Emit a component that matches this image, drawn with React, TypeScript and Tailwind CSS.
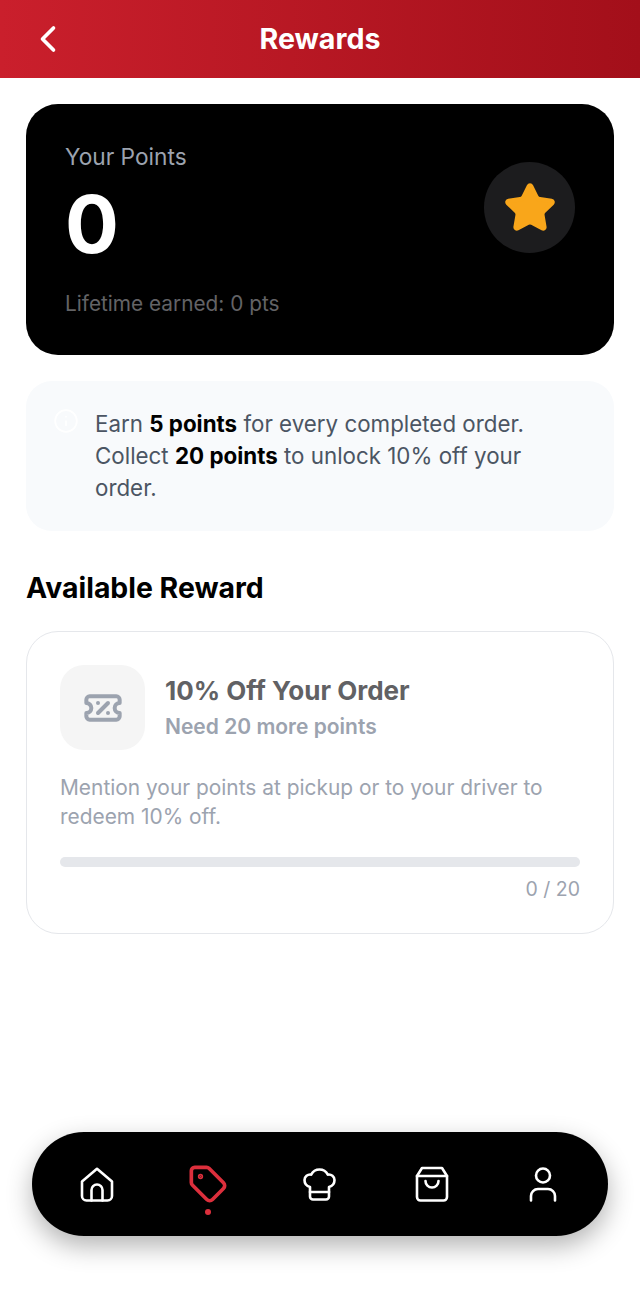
import { ChevronLeft, Info, Star, TicketPercent, Tag } from "lucide-react";

const font = { fontFamily: "Inter, sans-serif" };

const HomeIcon = () => (
  <svg width="34" height="35" viewBox="0 0 34 35" fill="none" stroke="white" strokeWidth="2.6" strokeLinejoin="round" strokeLinecap="round">
    <path d="M2 14.5 L17 1.8 L32 14.5 V29 a4.5 4.5 0 0 1 -4.5 4.5 H6.5 a4.5 4.5 0 0 1 -4.5 -4.5 Z" />
    <path d="M11.5 33.5 V23 a5.5 5.5 0 0 1 11 0 V33.5" />
  </svg>
);

const ChefIcon = () => (
  <svg width="33" height="33" viewBox="0 0 33 33" fill="none" stroke="white" strokeWidth="2.6" strokeLinejoin="round" strokeLinecap="round">
    <path d="M7 19 C3.2 18 1.5 15 1.5 12 C1.5 8.5 4.7 6 8.2 6.6 C9.8 3.5 13 1.5 16.5 1.5 C20 1.5 23.2 3.5 24.8 6.6 C28.3 6 31.5 8.5 31.5 12 C31.5 15 29.8 18 26 19 V28.5 a3 3 0 0 1 -3 3 H10 a3 3 0 0 1 -3 -3 Z" />
    <path d="M7 24 H26" />
  </svg>
);

const BagIcon = () => (
  <svg width="34" height="36" viewBox="0 0 34 36" fill="none" stroke="white" strokeWidth="2.6" strokeLinejoin="round" strokeLinecap="round">
    <path d="M2 10 L7 2 H27 L32 10 V31 a3.5 3.5 0 0 1 -3.5 3.5 H5.5 a3.5 3.5 0 0 1 -3.5 -3.5 Z" />
    <path d="M2 10 H32" />
    <path d="M10.5 15 a6.5 6.5 0 0 0 13 0" />
  </svg>
);

const UserIcon = () => (
  <svg width="28" height="35" viewBox="0 0 28 35" fill="none" stroke="white" strokeWidth="2.6" strokeLinecap="round">
    <circle cx="14" cy="8.5" r="7" />
    <path d="M2 33.5 V29 a7 7 0 0 1 7 -7 H19 a7 7 0 0 1 7 7 V33.5" />
  </svg>
);

export default function App() {
  return (
    <div className="relative min-h-screen bg-white" style={font}>
      <header className="relative flex h-[78px] items-center justify-center bg-gradient-to-r from-[#ca1f2c] to-[#a30f1a]">
        <ChevronLeft className="absolute left-[26px] top-[17px] text-white" size={44} strokeWidth={2} />
        <h1 className="text-[28.6px] font-bold text-white">Rewards</h1>
      </header>

      <main className="flex flex-col px-[26px] pt-[26px]">
        <section className="flex h-[251px] items-start justify-between rounded-[32px] bg-black pl-[39px] pr-[39px] pt-[39px]">
          <div className="flex flex-col">
            <p className="text-[22.7px] leading-[28px] text-[#9ca3af]">Your Points</p>
            <p className="mt-[13px] text-[80px] font-bold leading-[80px] text-white">0</p>
            <p className="mt-[27px] text-[20.8px] leading-[26px] text-[#636366]">Lifetime earned: 0 pts</p>
          </div>
          <div className="mt-[19px] flex h-[91px] w-[91px] items-center justify-center rounded-full bg-[#1c1c1e]">
            <Star size={54} className="text-[#f9a61a]" fill="#f9a61a" strokeWidth={2} />
          </div>
        </section>

        <section className="mt-[26px] flex h-[150px] gap-[16px] rounded-[26px] bg-[#f8fafc] pl-[27px] pr-[50px] pt-[27px]">
          <Info size={26} className="shrink-0 text-white" strokeWidth={1.6} />
          <p className="text-[22.35px] leading-[32px] text-[#4b5563]">
            Earn <b className="font-bold text-black">5 points</b> for every completed order. Collect{" "}
            <b className="font-bold text-black">20 points</b> to unlock 10% off your order.
          </p>
        </section>

        <h2 className="mt-[39px] text-[28.4px] font-bold leading-[36px] text-black">Available Reward</h2>

        <section className="mt-[25px] flex h-[303px] flex-col rounded-[32px] border border-[#e5e7eb] px-[33px] pt-[33px]">
          <div className="flex items-center gap-[20px]">
            <div className="flex h-[85px] w-[85px] items-center justify-center rounded-[24px] bg-[#f5f5f5]">
              <TicketPercent size={40} className="text-[#9ca3af]" strokeWidth={2.4} />
            </div>
            <div className="flex flex-col">
              <p className="text-[26px] font-bold leading-[34px] text-[#616164]">10% Off Your Order</p>
              <p className="mt-[5px] text-[21px] font-semibold leading-[28px] text-[#9ca3af]">Need 20 more points</p>
            </div>
          </div>
          <p className="mt-[23px] text-[20.9px] leading-[29px] text-[#9ca3af]">
            Mention your points at pickup or to your driver to redeem 10% off.
          </p>
          <div className="mt-[26px] h-[10px] rounded-full bg-[#e5e7eb]" />
          <p className="mt-[9px] text-right text-[19.5px] leading-[26px] text-[#9ca3af]">0 / 20</p>
        </section>
      </main>

      <nav className="absolute left-[32px] top-[1132px] grid h-[104px] w-[576px] grid-cols-5 items-center justify-items-center rounded-full bg-black px-[9px] shadow-[0_10px_26px_rgba(0,0,0,0.3)]">
        <HomeIcon />
        <div className="relative">
          <Tag size={40} className="text-[#dc2f3c]" strokeWidth={2.2} />
          <span className="absolute bottom-[-11px] left-[17px] h-[6px] w-[6px] rounded-full bg-[#dc2f3c]" />
        </div>
        <ChefIcon />
        <BagIcon />
        <UserIcon />
      </nav>
    </div>
  );
}
